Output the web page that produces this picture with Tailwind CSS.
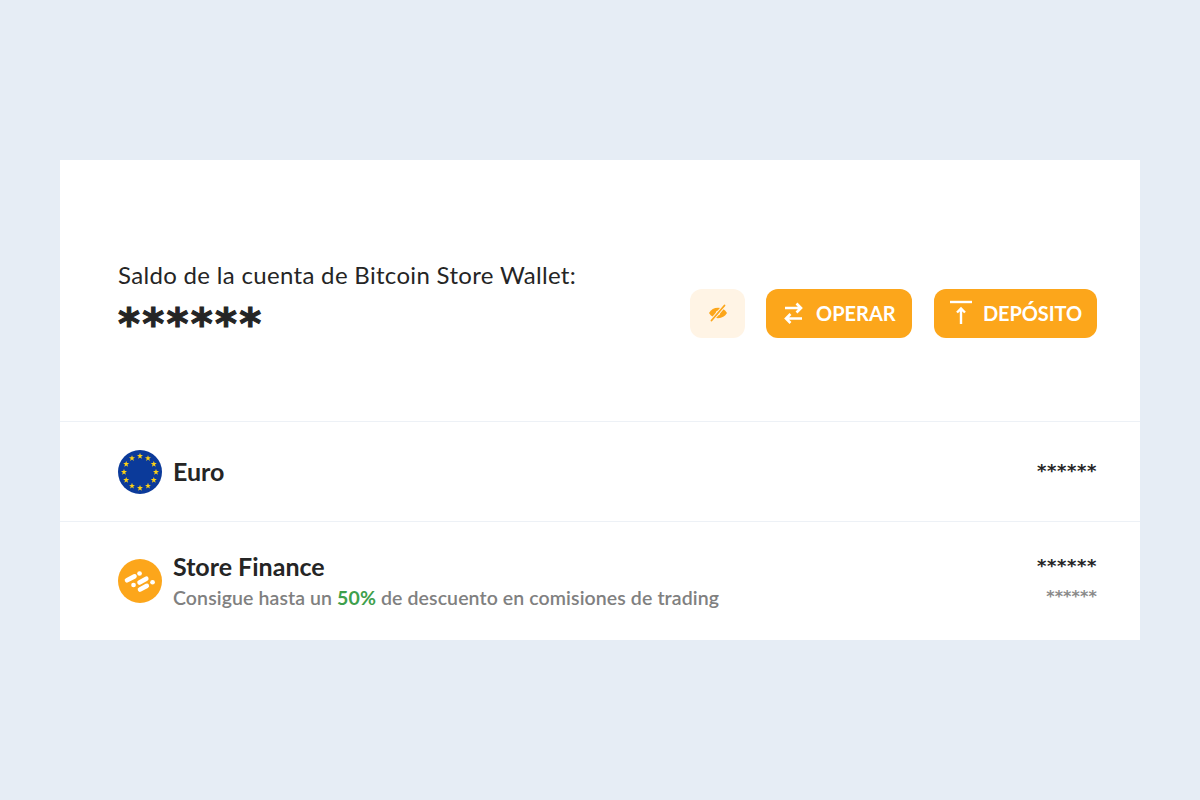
<!DOCTYPE html>
<html lang="es">
<head>
  <meta charset="UTF-8" />
  <title>Bitcoin Store Wallet</title>
  <script src="https://cdn.jsdelivr.net/npm/@tailwindcss/browser@4"></script>
</head>
<body class="h-[800px] overflow-hidden bg-[#e6edf5] py-[160px] px-[60px] font-['Lato','Noto_Sans',sans-serif] text-[#252525]">
  <div class="bg-white h-[480px] flex flex-col">

    <!-- balance -->
    <div class="h-[262px] flex items-center justify-between pt-[45px] pl-[58px] pr-[43px] border-b border-[#edf1f6]">
      <div class="mb-[17px]">
        <div class="text-[24px] leading-[32px] tracking-[0.32px]">Saldo de la cuenta de Bitcoin Store Wallet:</div>
        <div class="h-[50px] mt-[9px] text-[42px] leading-[50px] tracking-[2.300px] font-bold font-['DejaVu_Sans',sans-serif] [-webkit-text-stroke:1px_#252525]">******</div>
      </div>
      <div class="flex items-center">
        <button class="w-[55px] h-[49px] rounded-[12px] bg-[#fff4e5] flex items-center justify-center">
          <svg width="20" height="20" viewBox="0 0 20 20" fill="none">
            <path d="M1 10c2-3.400 5-5.200 9-5.200s7 1.800 9 5.200c-2 3.400-5 5.200-9 5.200s-7-1.800-9-5.200z" fill="#fca61b"/>
            <circle cx="10" cy="10" r="2.200" fill="#fff4e5"/>
            <path d="M3.500 17.500L16.500 2.500" stroke="#fff4e5" stroke-width="3.500"/>
            <path d="M3.500 17.500L16.500 2.500" stroke="#fca61b" stroke-width="1.800" stroke-linecap="round"/>
          </svg>
        </button>
        <button class="ml-[21px] w-[146px] h-[49px] rounded-[12px] bg-[#fca61b] flex items-center pl-[18px] text-white text-[20px] font-bold">
          <svg width="19" height="24" viewBox="0 0 19 24" fill="none" stroke="white" stroke-width="2.600">
            <path d="M1 7h15.500M12.500 2.500L17 7l-4.500 4.500"/>
            <path d="M18 17.500H2.500M6.500 13L2 17.500 6.500 22"/>
          </svg>
          <span class="ml-[13px]">OPERAR</span>
        </button>
        <button class="ml-[22px] w-[163px] h-[49px] rounded-[12px] bg-[#fca61b] flex items-center pl-[16px] text-white text-[20px] font-bold">
          <svg width="22" height="26" viewBox="0 0 22 26" fill="none" stroke="white" stroke-width="2.400">
            <path d="M0 2h22"/>
            <path d="M11 24V9M7 12.500l4-4 4 4"/>
          </svg>
          <span class="ml-[11px] tracking-[-0.1px]">DEPÓSITO</span>
        </button>
      </div>
    </div>

    <!-- euro -->
    <div class="h-[100px] flex items-center justify-between pl-[58px] pr-[43px] border-b border-[#edf1f6]">
      <div class="flex items-center">
        <svg width="44" height="44" viewBox="0 0 44 44">
          <defs>
            <polygon id="eu-star" points="0,-3 0.800,-0.900 3,-0.900 1.200,0.500 1.900,2.700 0,1.400 -1.900,2.700 -1.200,0.500 -3,-0.900 -0.800,-0.900" fill="#fcd116"/>
          </defs>
          <circle cx="22" cy="22" r="22" fill="#0b3a9a"/>
          <use href="#eu-star" x="22" y="6"/>
          <use href="#eu-star" x="30" y="8.200"/>
          <use href="#eu-star" x="35.800" y="14"/>
          <use href="#eu-star" x="38" y="22"/>
          <use href="#eu-star" x="35.800" y="30"/>
          <use href="#eu-star" x="30" y="35.800"/>
          <use href="#eu-star" x="22" y="38"/>
          <use href="#eu-star" x="14" y="35.800"/>
          <use href="#eu-star" x="8.200" y="30"/>
          <use href="#eu-star" x="6" y="22"/>
          <use href="#eu-star" x="8.200" y="14"/>
          <use href="#eu-star" x="14" y="8.200"/>
        </svg>
        <span class="ml-[11px] text-[25px] font-bold">Euro</span>
      </div>
      <div class="mb-[2px] text-[18px] leading-[20px] font-bold tracking-[0.6px] font-['DejaVu_Sans',sans-serif]">******</div>
    </div>

    <!-- store finance -->
    <div class="flex-1 flex items-center justify-between pl-[58px] pr-[43px]">
      <div class="flex items-center">
        <svg width="44" height="44" viewBox="0 0 44 44">
          <circle cx="22" cy="22" r="22" fill="#fca61b"/>
          <g stroke="white" stroke-width="4.600" stroke-linecap="round">
            <path d="M9 21.300l7.500-3.900"/>
            <path d="M21.500 14.500h.1"/>
            <path d="M15.500 26h.1"/>
            <path d="M21.500 23.500l6.800-3.800"/>
            <path d="M22 30.500l6.800-3.600"/>
            <path d="M34.500 23.300h.1"/>
          </g>
        </svg>
        <div class="ml-[11px]">
          <div class="text-[25px] leading-[31px] font-bold">Store Finance</div>
          <div class="text-[19.500px] leading-[26px] mt-[3px] tracking-[0.1px] font-semibold text-[#808080]">Consigue hasta un <span class="text-[#3ea04c] font-bold">50%</span> de descuento en comisiones de trading</div>
        </div>
      </div>
      <div class="flex flex-col items-end">
        <div class="text-[18px] leading-[20px] font-bold tracking-[0.6px] font-['DejaVu_Sans',sans-serif]">******</div>
        <div class="text-[16px] leading-[20px] mt-[11px] font-bold tracking-[0.1px] font-['DejaVu_Sans',sans-serif] text-[#8a8a8a]">******</div>
      </div>
    </div>

  </div>
</body>
</html>
